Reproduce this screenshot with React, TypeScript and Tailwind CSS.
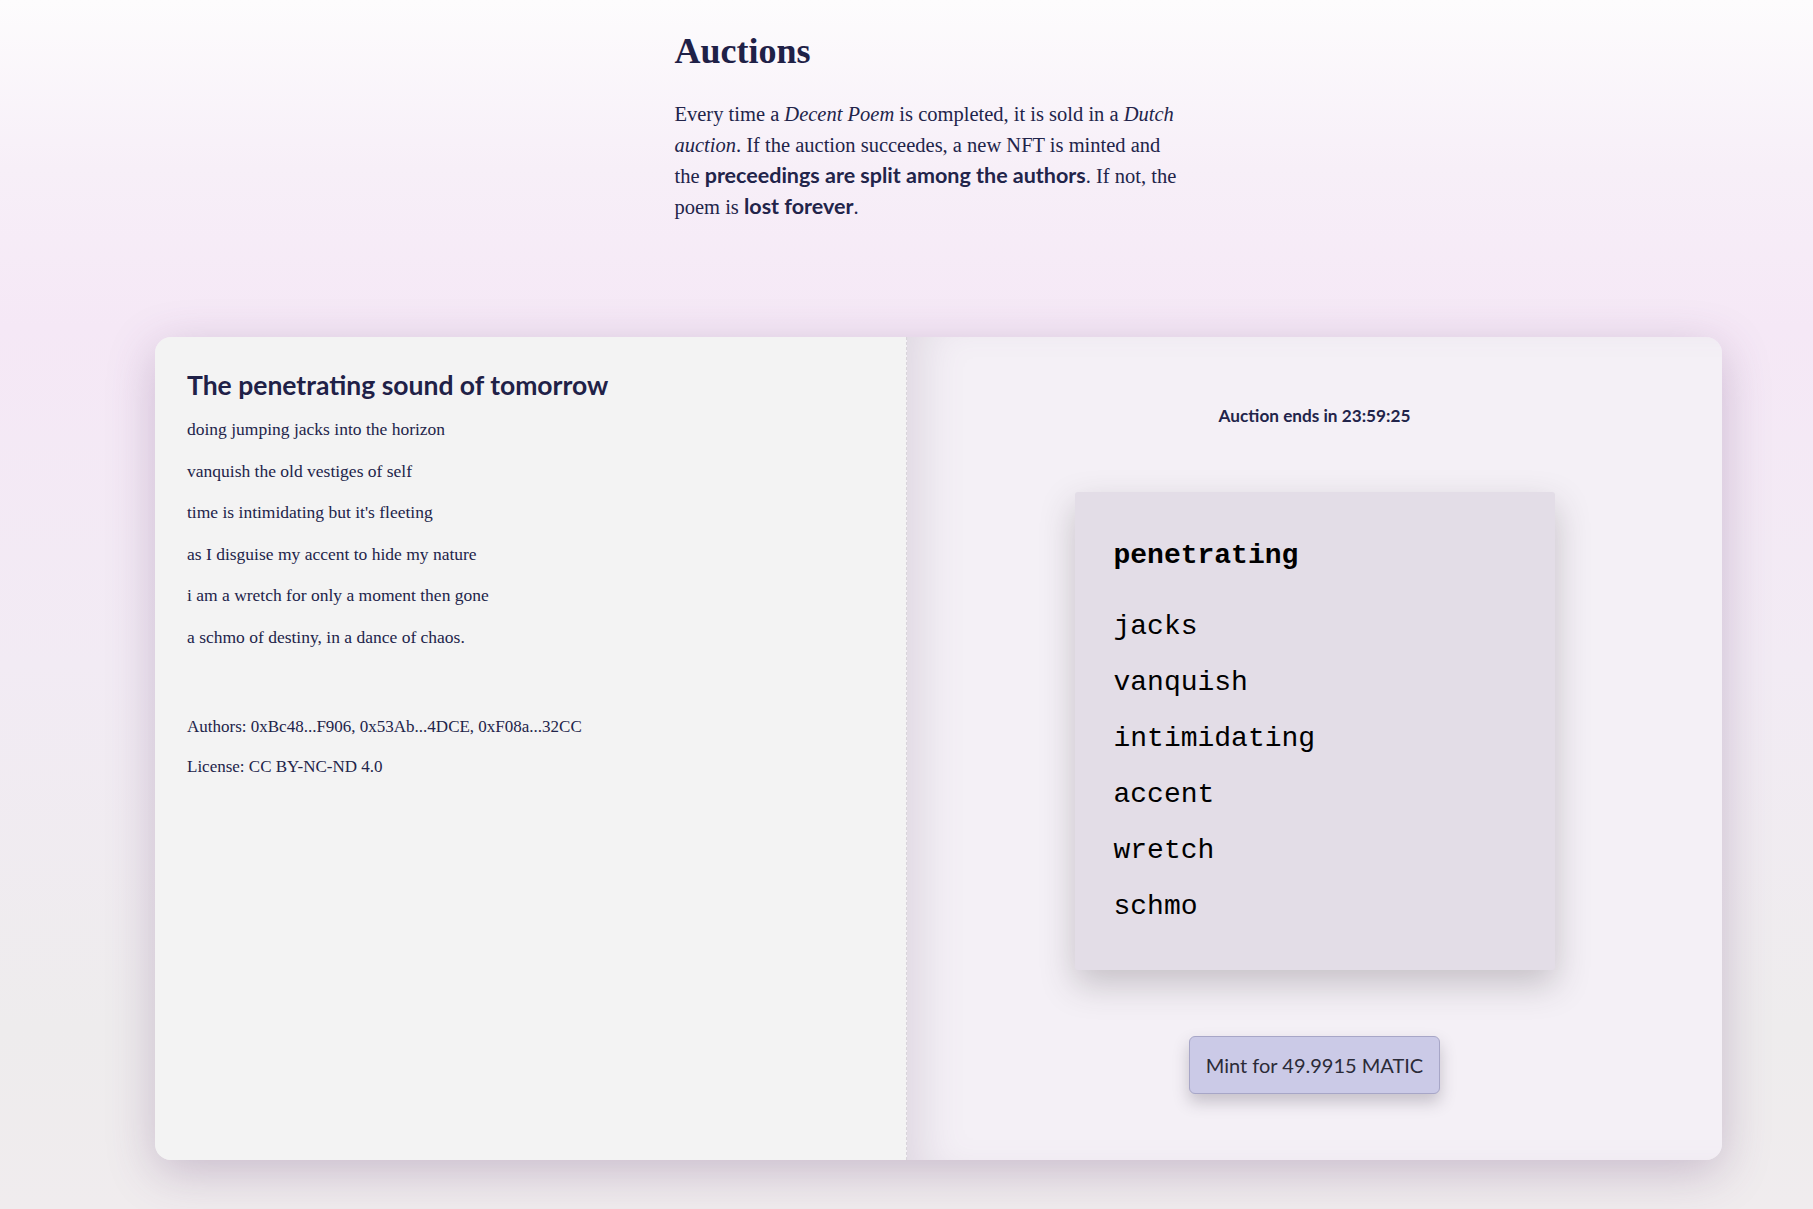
import React from 'react';

const POEM = [
  'doing jumping jacks into the horizon',
  'vanquish the old vestiges of self',
  "time is intimidating but it's fleeting",
  'as I disguise my accent to hide my nature',
  'i am a wretch for only a moment then gone',
  'a schmo of destiny, in a dance of chaos.',
];

const WORDS = ['jacks', 'vanquish', 'intimidating', 'accent', 'wretch', 'schmo'];

const serif = "font-['Liberation_Serif','DejaVu_Serif',serif]";
const sans = "font-['Lato','Noto_Sans',sans-serif]";
const mono = "font-['Liberation_Mono','DejaVu_Sans_Mono',monospace]";

const App: React.FC = () => {
  return (
    <div className="min-h-[1209px] w-full bg-[linear-gradient(180deg,#fdfcfd_0%,#f7eff8_14%,#f5e8f6_27%,#f2ebf4_55%,#eeeced_85%,#f0ecee_100%)] text-[#22244a] pl-[155px] pr-[91px] pt-[30px] pb-[48px]">
      <section className="w-[528px] mx-auto">
        <h1 className={`${serif} text-[36px] leading-[43px] font-bold text-[#1f2147]`}>Auctions</h1>
        <p className={`${serif} text-[20.5px] leading-[31px] mt-[26px] whitespace-nowrap`}>
          Every time a <em>Decent Poem</em> is completed, it is sold in a <em>Dutch</em>
          <br />
          <em>auction</em>. If the auction succeedes, a new NFT is minted and
          <br />
          the <strong className={`${sans} font-bold text-[21.5px] leading-none`}>preceedings are split among the authors</strong>. If not, the
          <br />
          poem is <strong className={`${sans} font-bold text-[21.5px] leading-none`}>lost forever</strong>.
        </p>
      </section>

      <div className="mt-[114px] flex h-[823px] rounded-[16px] overflow-hidden shadow-[0_12px_48px_rgba(100,60,115,0.28)]">
        <div className="w-[751px] bg-[#f3f3f3] p-8">
          <h2 className={`${sans} text-[26.5px] leading-[33px] font-bold text-[#1f2147]`}>The penetrating sound of tomorrow</h2>
          <div className={`${serif} text-[17.5px] leading-[41.6px] mt-[7px]`}>
            {POEM.map((line, i) => (
              <div key={i}>{line}</div>
            ))}
          </div>
          <div className={`${serif} text-[17px] leading-[40px] mt-[48px]`}>
            <div>Authors: 0xBc48...F906, 0x53Ab...4DCE, 0xF08a...32CC</div>
            <div>License: CC BY-NC-ND 4.0</div>
          </div>
        </div>

        <div className="flex-1 bg-[#f4f0f6] border-l border-dashed border-[#d8d4da] shadow-[inset_36px_0_44px_-22px_rgba(120,100,130,0.18)] flex flex-col items-center pt-[66px]">
          <div className={`${sans} text-[17.2px] leading-[26px] font-bold text-[#22244a]`}>Auction ends in 23:59:25</div>

          <div className="mt-[63px] w-[480px] bg-[#e3dde7] rounded-[3px] shadow-[0_14px_34px_rgba(60,50,60,0.25)] pl-[39px] pr-8 pt-[36px] pb-[35px] text-black">
            <div className={`${mono} text-[28px] leading-[56px] font-bold`}>penetrating</div>
            <div className="mt-[15px]">
              {WORDS.map((w) => (
                <div key={w} className={`${mono} text-[28px] leading-[56px]`}>
                  {w}
                </div>
              ))}
            </div>
          </div>

          <button className={`${sans} mt-[66px] h-[58px] px-[16px] rounded-[6px] bg-[#cbcae7] border border-[#a7a6c7] text-[20px] text-[#2b2b38] shadow-[0_8px_16px_rgba(60,50,70,0.25)]`}>
            Mint for 49.9915 MATIC
          </button>
        </div>
      </div>
    </div>
  );
};

export default App;
